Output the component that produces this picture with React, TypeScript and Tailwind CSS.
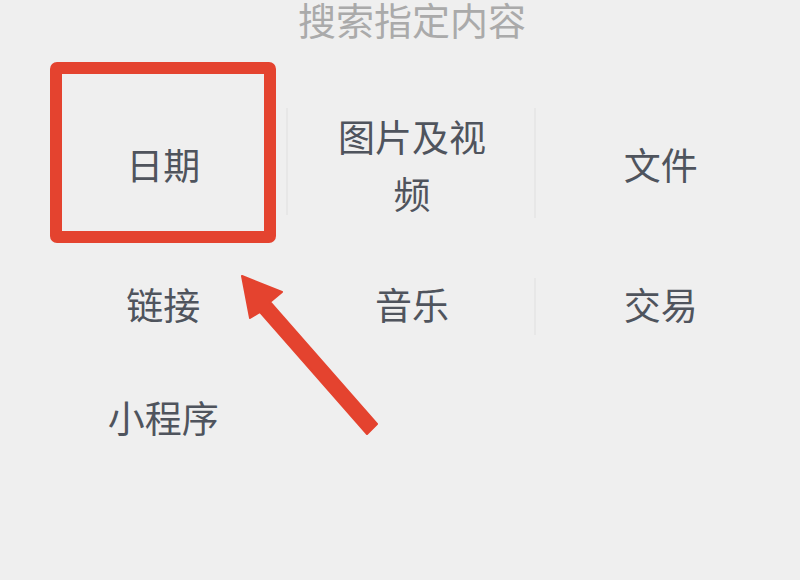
import React from "react";

const cjk = { fontFamily: '"Noto Sans CJK SC", "Noto Sans", sans-serif' };

function Cell({ children, line, lineTop, lineH }: { children: React.ReactNode; line?: boolean; lineTop?: string; lineH?: string }) {
  return (
    <div className="relative flex items-center justify-center text-center">
      {children}
      {line && <span className={`absolute right-0 w-[2px] bg-[#e7e7e7] ${lineTop} ${lineH}`} />}
    </div>
  );
}

export default function App() {
  return (
    <div className="relative w-[800px] h-[580px] overflow-hidden bg-[#efefef]" style={cjk}>
      <div className="ml-[39px] w-[746px]">
        <div className="text-center text-[38px] leading-[38px] text-[#aaaaaa]">搜索指定内容</div>
        <div className="mt-[42px] grid grid-cols-3 grid-rows-[170px_110px_116px] text-[37px] text-[#4f545d]">
          <Cell line lineTop="top-[28px]" lineH="h-[107px]">日期</Cell>
          <Cell line lineTop="top-[28px]" lineH="h-[110px]">
            <div className="leading-[57px] w-[170px]">图片及视频</div>
          </Cell>
          <Cell>文件</Cell>
          <Cell>链接</Cell>
          <Cell line lineTop="top-[28px]" lineH="h-[57px]">音乐</Cell>
          <Cell>交易</Cell>
          <Cell>小程序</Cell>
          <div />
          <div />
        </div>
      </div>

      {/* annotation: highlight box */}
      <div className="absolute left-[50px] top-[62px] w-[226px] h-[181px] rounded-[7px] border-[12px] border-[#e4432f]" />

      {/* annotation: arrow */}
      <svg className="absolute left-0 top-0" width="800" height="580">
        <polygon
          points="242,276 282,292 270,302 377,424 367,434 260,312 250,318"
          fill="#e4432f"
          stroke="#e4432f"
          strokeWidth="2"
          strokeLinejoin="round"
        />
      </svg>
    </div>
  );
}
